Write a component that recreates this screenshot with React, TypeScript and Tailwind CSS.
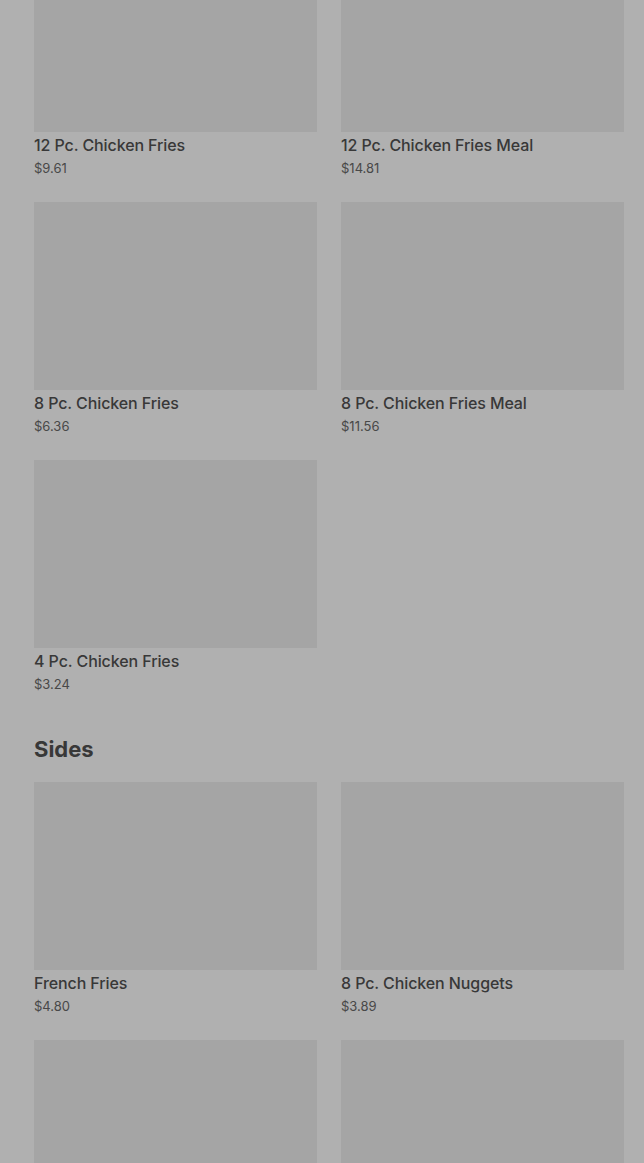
type Item = { name: string; price: string };

const chickenFries: Item[] = [
  { name: '12 Pc. Chicken Fries', price: '$9.61' },
  { name: '12 Pc. Chicken Fries Meal', price: '$14.81' },
  { name: '8 Pc. Chicken Fries', price: '$6.36' },
  { name: '8 Pc. Chicken Fries Meal', price: '$11.56' },
  { name: '4 Pc. Chicken Fries', price: '$3.24' },
];

const sides: Item[] = [
  { name: 'French Fries', price: '$4.80' },
  { name: '8 Pc. Chicken Nuggets', price: '$3.89' },
];

function MenuCard({ item }: { item: Item }) {
  return (
    <div className="flex flex-col">
      <div className="h-[188px] w-full bg-[#a5a5a5]" />
      <div className="mt-[2px] text-[16px] leading-[22px] font-medium tracking-[-0.1px] text-[#383838]">{item.name}</div>
      <div className="mt-[2px] text-[13px] leading-[20px] text-[#484848]">{item.price}</div>
    </div>
  );
}

export default function App() {
  return (
    <div
      className="h-[1163px] w-full overflow-hidden bg-[#b0b0b0]"
      style={{ fontFamily: 'Inter, "Noto Sans", sans-serif' }}
    >
      <div className="-mt-[56px] pl-[34px] pr-[20px]">
        {/* Chicken Fries */}
        <div className="grid grid-cols-2 gap-x-[24px] gap-y-[24px]">
          {chickenFries.map((item) => (
            <MenuCard key={item.name} item={item} />
          ))}
        </div>

        {/* Sides */}
        <h2 className="mt-[39px] mb-[17px] text-[22px] leading-[32px] font-bold text-[#383838]">Sides</h2>
        <div className="grid grid-cols-2 gap-x-[24px] gap-y-[24px]">
          {sides.map((item) => (
            <MenuCard key={item.name} item={item} />
          ))}
          {/* next row, only the pictures are in view */}
          <div className="h-[188px] w-full bg-[#a5a5a5]" />
          <div className="h-[188px] w-full bg-[#a5a5a5]" />
        </div>
      </div>
    </div>
  );
}
